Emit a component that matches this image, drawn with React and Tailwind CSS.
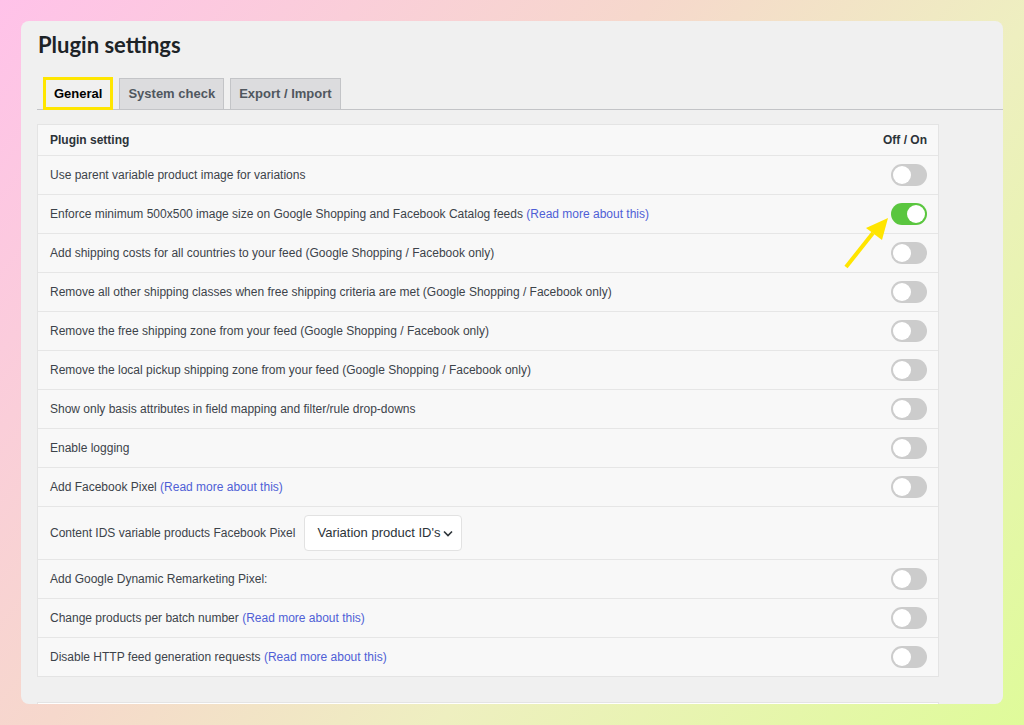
import React from "react";

const rows = [
  { text: "Use parent variable product image for variations" },
  { text: "Enforce minimum 500x500 image size on Google Shopping and Facebook Catalog feeds", link: true, on: true },
  { text: "Add shipping costs for all countries to your feed (Google Shopping / Facebook only)" },
  { text: "Remove all other shipping classes when free shipping criteria are met (Google Shopping / Facebook only)" },
  { text: "Remove the free shipping zone from your feed (Google Shopping / Facebook only)" },
  { text: "Remove the local pickup shipping zone from your feed (Google Shopping / Facebook only)" },
  { text: "Show only basis attributes in field mapping and filter/rule drop-downs" },
  { text: "Enable logging" },
  { text: "Add Facebook Pixel", link: true },
  { select: true },
  { text: "Add Google Dynamic Remarketing Pixel:" },
  { text: "Change products per batch number", link: true },
  { text: "Disable HTTP feed generation requests", link: true },
];

function Toggle({ on }) {
  return (
    <div
      className={
        on
          ? "w-[36px] h-[22px] rounded-full bg-[#5ac63f] flex items-center justify-end pr-[2px]"
          : "w-[36px] h-[22px] rounded-full bg-[#cccccc] flex items-center pl-[2px]"
      }
    >
      <div className="w-[18px] h-[18px] rounded-full bg-white" />
    </div>
  );
}

export default function App() {
  return (
    <div
      className="relative w-[1024px] h-[725px] overflow-hidden p-[21px] bg-[linear-gradient(130deg,#ffc2e9_0%,#f6d8cc_40%,#eeefc0_64%,#dffb9a_100%)]"
      style={{ fontFamily: '"Liberation Sans", Arial, sans-serif' }}
    >
      <div className="w-[982px] h-[683px] rounded-[8px] bg-[#f0f0f0] overflow-hidden pl-[16px]">
        <h1
          className="mt-[10px] ml-[1px] text-[22px] leading-[28px] font-bold text-[#1d2327]"
          style={{ fontFamily: 'Lato, "Liberation Sans", sans-serif' }}
        >
          Plugin settings
        </h1>
        <div className="mt-[18px] flex items-end h-[33px] border-b border-[#c3c4c7] pl-[6px] gap-[6px]">
          <div className="-mb-px h-[33px] border-[3px] border-[#ffe600] bg-[#f0f0f0] px-[8px] flex items-center text-[13px] font-bold text-black">
            General
          </div>
          <div className="-mb-px h-[32px] border border-[#c3c4c7] bg-[#dcdcde] px-[8px] flex items-center text-[13px] font-bold text-[#50575e]">
            System check
          </div>
          <div className="-mb-px h-[32px] border border-[#c3c4c7] bg-[#dcdcde] px-[8px] flex items-center text-[13px] font-bold text-[#50575e]">
            Export / Import
          </div>
        </div>

        <div className="mt-[14px] w-[902px] border border-[#e4e4e4] bg-[#f8f8f8] text-[12px] text-[#3c434a]">
          <div className="h-[30px] flex items-center justify-between pl-[12px] pr-[11px] font-bold text-[#2c3338]">
            <span>Plugin setting</span>
            <span>Off / On</span>
          </div>
          {rows.map((r, i) =>
            r.select ? (
              <div key={i} className="h-[53px] border-t border-[#e6e6e6] flex items-center pl-[12px] pr-[11px]">
                <span className="whitespace-nowrap">Content IDS variable products Facebook Pixel</span>
                <div className="ml-[9px] h-[36px] w-[158px] rounded-[4px] border border-[#e2e2e2] bg-white flex items-center pl-[12px] text-[13px] text-[#2c3338] whitespace-nowrap">
                  <span>Variation product ID's</span>
                  <svg width="12" height="12" viewBox="0 0 12 12" className="ml-[2px]">
                    <path d="M2 4.5 L6 8.5 L10 4.5" fill="none" stroke="#2c3338" strokeWidth="1.6" />
                  </svg>
                </div>
              </div>
            ) : (
              <div key={i} className="h-[39px] border-t border-[#e6e6e6] flex items-center justify-between pl-[12px] pr-[11px]">
                <span className="whitespace-nowrap">
                  {r.text}
                  {r.link && <span className="text-[#4f5fd6]"> (Read more about this)</span>}
                </span>
                <Toggle on={r.on} />
              </div>
            )
          )}
        </div>
        <div className="mt-[25px] w-[902px] h-[40px] border border-[#e4e4e4] bg-white" />
      </div>

      <svg className="absolute left-0 top-0 pointer-events-none" width="1024" height="725">
        <line x1="846" y1="267" x2="873" y2="233" stroke="#ffe500" strokeWidth="4" />
        <polygon points="888,218 866,228 882,240" fill="#ffe500" />
      </svg>
    </div>
  );
}
